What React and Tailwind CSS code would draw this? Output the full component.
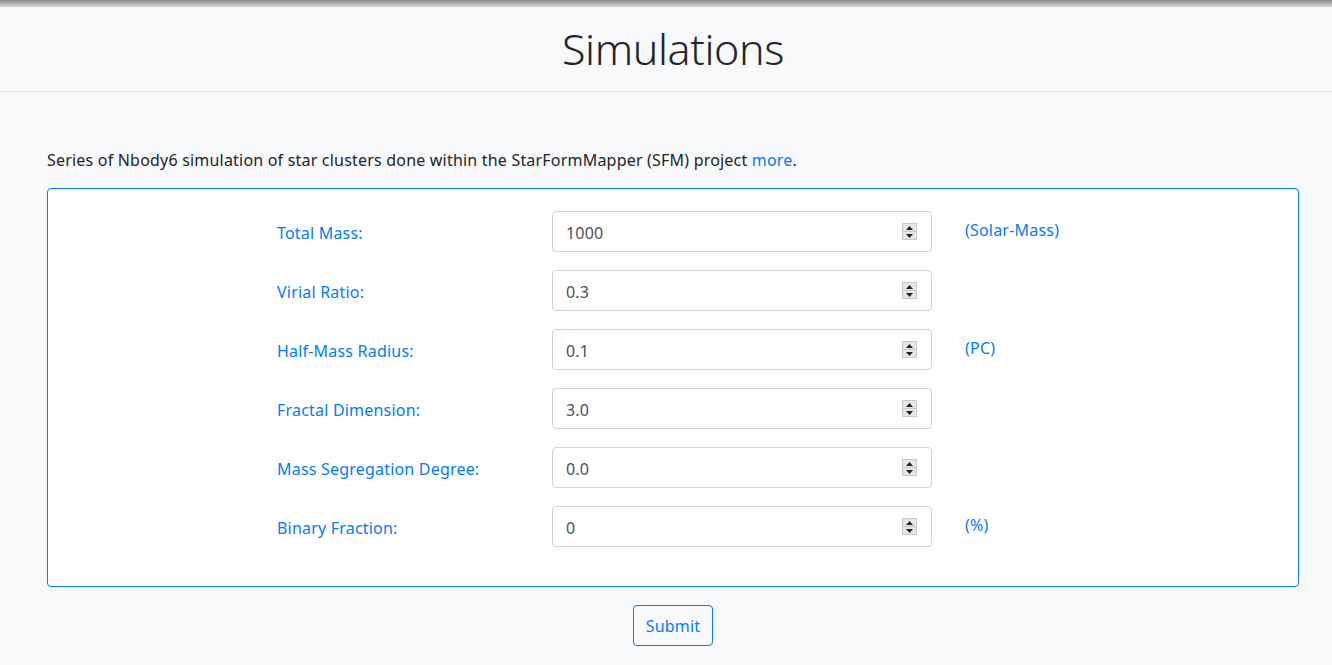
import React from 'react'

const rows = [
    { label: 'Total Mass:', value: '1000', unit: '(Solar-Mass)' },
    { label: 'Virial Ratio:', value: '0.3', unit: '' },
    { label: 'Half-Mass Radius:', value: '0.1', unit: '(PC)' },
    { label: 'Fractal Dimension:', value: '3.0', unit: '' },
    { label: 'Mass Segregation Degree:', value: '0.0', unit: '' },
    { label: 'Binary Fraction:', value: '0', unit: '(%)' },
]

function Spinner() {
    return (
        <div className="flex flex-col w-[15px] h-[17px] border border-[#c8c8c8] bg-[#e6e6e6]">
            <div className="flex-1 flex items-center justify-center border-b border-[#c8c8c8]">
                <svg width="7" height="4" viewBox="0 0 7 4">
                    <path d="M3.5 0 L7 4 L0 4 Z" fill="#222" />
                </svg>
            </div>
            <div className="flex-1 flex items-center justify-center">
                <svg width="7" height="4" viewBox="0 0 7 4">
                    <path d="M0 0 L7 0 L3.5 4 Z" fill="#222" />
                </svg>
            </div>
        </div>
    )
}

export default function App() {
    return (
        <div
            className="min-h-[665px] bg-[#f8f9fa] text-[#212529] text-[16px] tracking-[0.2px]"
            style={{ fontFamily: '"Noto Sans", "Open Sans", sans-serif' }}
        >
            <div className="h-[7px] bg-gradient-to-b from-[#8a8a8a] to-[#d6d6d6]" />
            <header className="h-[85px] border-b border-[#dee2e6] flex items-center justify-center pl-[47px] pr-[33px]">
                <h1 className="text-[43px] font-light leading-none -mt-[1px] tracking-[-0.4px]">Simulations</h1>
            </header>

            <div className="pl-[47px] pr-[33px] pt-[56px]">
                <p className="leading-[24px]">
                    Series of Nbody6 simulation of star clusters done within the StarFormMapper (SFM) project{' '}
                    <a href="#" className="text-[#007bff]">more</a>.
                </p>

                <div className="mt-[16px] bg-white border border-[#007bff] rounded-[4px] pt-[22px] pb-[39px] pl-[229px]">
                    <div className="flex flex-col gap-[18px]">
                        {rows.map((row) => (
                            <div key={row.label} className="flex items-center h-[41px]">
                                <label className="w-[275px] text-[#007bff] pt-[3px]">
                                    {row.label}
                                </label>
                                <div className="w-[380px] h-[41px] border border-[#ced4da] rounded-[4px] flex items-center justify-between pl-[13px] pr-[14px]">
                                    <span className="text-[#495057] pt-[2px]">{row.value}</span>
                                    <Spinner />
                                </div>
                                <span className="ml-[33px] text-[#007bff] -mt-[4px]">{row.unit}</span>
                            </div>
                        ))}
                    </div>
                </div>

                <div className="flex justify-center mt-[18px]">
                    <button className="h-[41px] px-[12px] border border-[#007bff] text-[#007bff] rounded-[4px] bg-transparent">
                        Submit
                    </button>
                </div>
            </div>
        </div>
    )
}
